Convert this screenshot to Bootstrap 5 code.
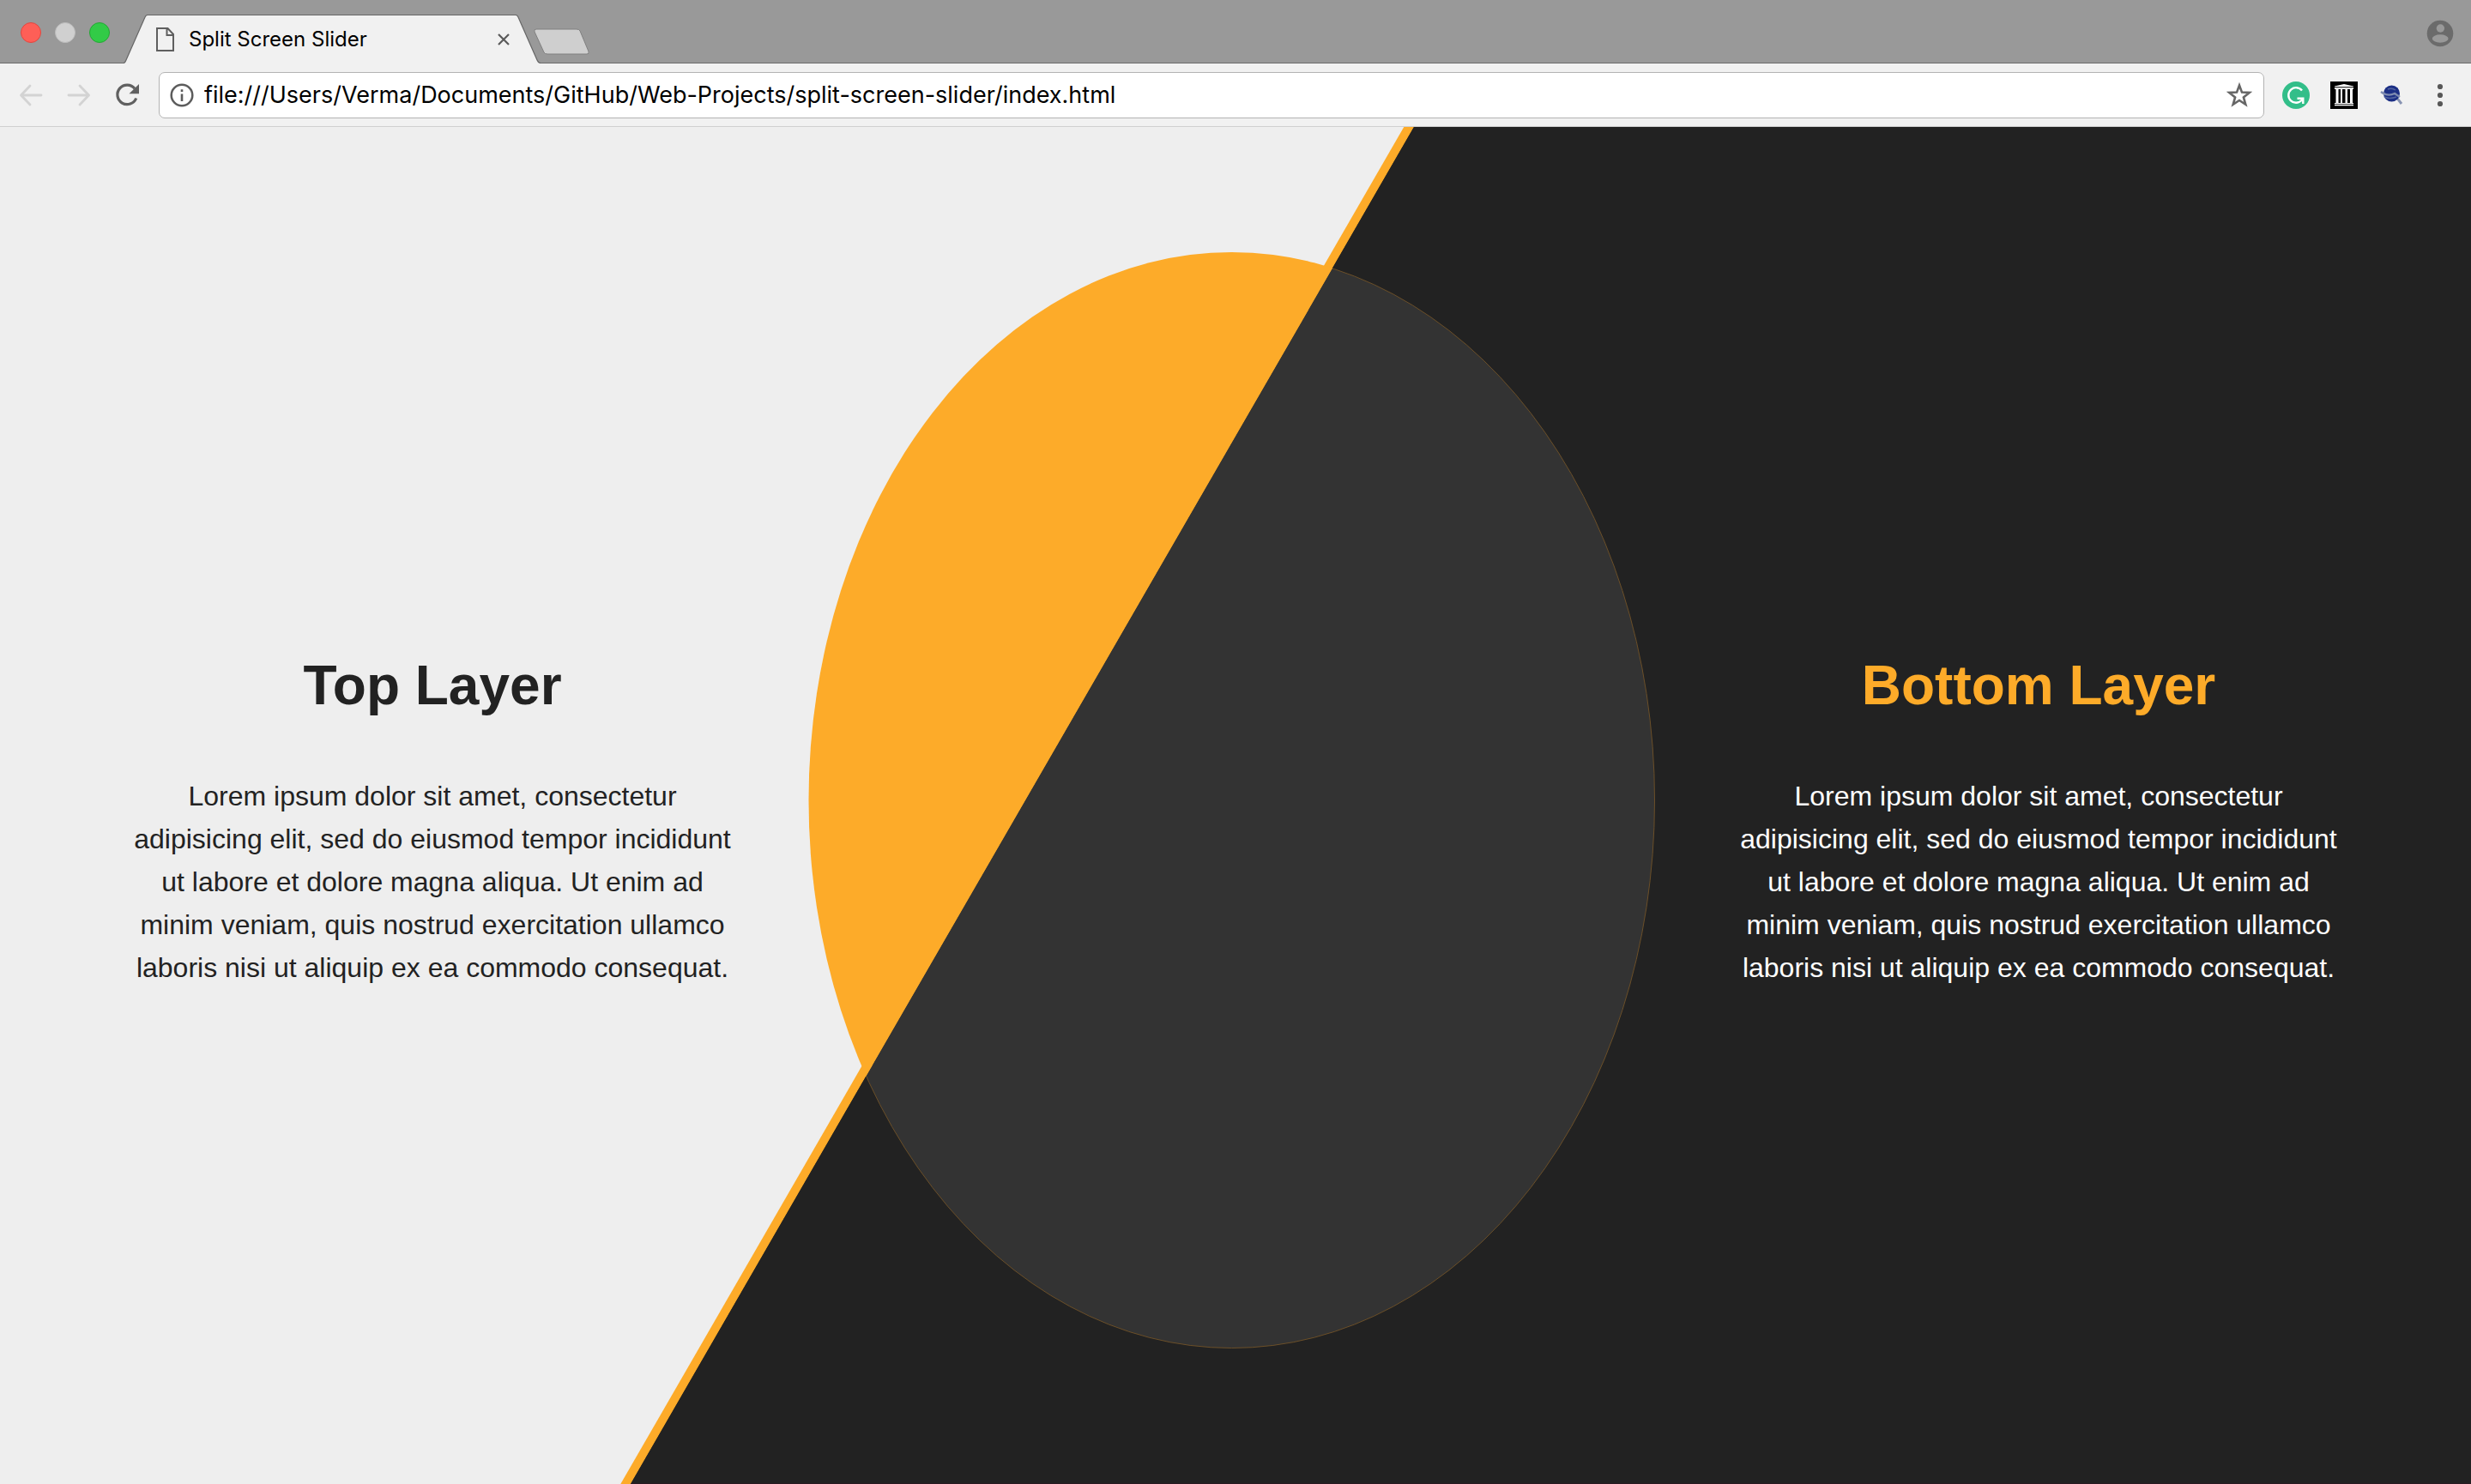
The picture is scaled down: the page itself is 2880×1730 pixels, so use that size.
<!DOCTYPE html>
<html lang="en">
<head>
<meta charset="utf-8">
<meta name="viewport" content="width=device-width, initial-scale=1">
<title>Split Screen Slider</title>
<link href="https://cdn.jsdelivr.net/npm/bootstrap@5.3.0/dist/css/bootstrap.min.css" rel="stylesheet">
<script src="https://cdn.jsdelivr.net/npm/bootstrap@5.3.0/dist/js/bootstrap.bundle.min.js" defer></script>
<style>
  body { font-family: "Liberation Sans", Arial, sans-serif; background: #222; }
  .chrome { font-family: Inter, Roboto, sans-serif; }
  .chrome svg { display: block; flex: none; }
  .chrome button { border: 0; padding: 0; background: none; flex: none; }
  .tab-strip { height: 74px; background: #999; border-bottom: 1px solid #6b6b6b; padding: 0 20px 0 24px; }
  .chrome .light { width: 24px; height: 24px; border-radius: 50%; border: 1px solid; }
  .chrome .light-close { background: #fe5f57; border-color: #e2463f; }
  .chrome .light-min { background: #d0d0d0; border-color: #bcbcbc; }
  .chrome .light-max { background: #32cb47; border-color: #23a833; }
  .window-lights { padding-top: 2px; }
  .page-tab { width: 486px; height: 57px; margin-left: 16px; padding: 0 36px 0 38px; margin-bottom: -1px; }
  .tab-shape { left: 0; top: 0; width: 100%; height: 100%; }
  .tab-title { font-size: 24px; line-height: 30px; color: #000; }
  .chrome .new-tab { margin: 0 0 8px -8px; }
  .tool-strip { height: 74px; background: #f1f1f1; border-bottom: 1px solid #cfcfcf; padding: 0 20px 0 22px; }
  .address { height: 54px; margin: 0 21px 0 23px; padding: 0 13px 0 12px; background: #fff; border: 1px solid #b3b3b3; border-radius: 7px; }
  .address input { border: 0; outline: 0; padding: 0; background: none; color: #000; font-size: 27px; line-height: 36px; }
  .extensions { gap: 24px; }
  .stage { background: #222; padding: 38px 5% 0; }
  .scene { inset: 0; width: 100%; height: 100%; }
  .layer-text { width: 720px; max-width: 40%; }
  .layer-text h1 { font-size: 64px; line-height: 72px; font-weight: 700; margin-bottom: 68px; }
  .layer-text p { font-size: 32px; line-height: 50px; margin: 0; }
  .layer-top { color: #222; }
  .layer-bottom { color: #fff; }
  .layer-bottom h1 { color: #fdab29; }
</style>
</head>
<body class="vh-100 d-flex flex-column overflow-hidden">
<header class="chrome">
  <div class="tab-strip d-flex align-items-end">
    <div class="window-lights d-flex align-self-center gap-3">
      <button class="light light-close" aria-label="Close window"></button>
      <button class="light light-min" aria-label="Minimise window"></button>
      <button class="light light-max" aria-label="Zoom window"></button>
    </div>
    <div class="page-tab position-relative d-flex align-items-center">
      <svg class="tab-shape position-absolute" viewBox="0 0 486 57" preserveAspectRatio="none" aria-hidden="true"><path d="M0 57 Q2 56 3 53 L25 3 Q26 .5 28 .5 H457 Q459 .5 460 3 L482 53 Q483 56 486 57Z" fill="#f1f1f1"/><path d="M0 56.5 Q2 56 3 53 L25 3 Q26 .5 28 .5 H457 Q459 .5 460 3 L482 53 Q483 56 486 56.5" fill="none" stroke="#666" stroke-width="1.2"/></svg>
      <svg class="position-relative" width="22" height="28" viewBox="0 0 22 28" aria-hidden="true"><path d="M1 1H13.500L20 8V27H1ZM12.500 1V9H20" fill="none" stroke="#5f5f5f" stroke-width="2"/></svg>
      <span class="tab-title position-relative ms-3 flex-grow-1">Split Screen Slider</span>
      <button class="position-relative" aria-label="Close tab"><svg width="14" height="14" viewBox="0 0 14 14"><path d="M1 1L13 13M13 1L1 13" stroke="#5a5a5a" stroke-width="2.200"/></svg></button>
    </div>
    <button class="new-tab" aria-label="New tab"><svg width="66" height="32" viewBox="0 0 66 32"><path d="M3 1H50Q53 1 54 3L64 27Q65 30 62 30H16Q13 30 12 28L1 4Q0 1 3 1Z" fill="#cfcfcf" stroke="#808080"/></svg></button>
    <button class="align-self-center ms-auto pt-1" aria-label="Profile"><svg width="32" height="32" viewBox="0 0 32 32"><circle cx="16" cy="16" r="15.300" fill="#6b6b6b"/><circle cx="16.400" cy="10" r="4.700" fill="#999"/><ellipse cx="16.200" cy="22" rx="9.400" ry="4.700" fill="#999"/></svg></button>
  </div>
  <div class="tool-strip d-flex align-items-center">
    <button aria-label="Back"><svg width="28" height="28" viewBox="0 0 28 28"><path d="M26 14H3M13 3L2.500 14L13 25" fill="none" stroke="#d3d3d3" stroke-width="2.800" stroke-linecap="round" stroke-linejoin="round"/></svg></button>
    <button class="ms-4 ps-1" aria-label="Forward"><svg width="28" height="28" viewBox="0 0 28 28"><path d="M2 14H25M15 3L25.500 14L15 25" fill="none" stroke="#d3d3d3" stroke-width="2.800" stroke-linecap="round" stroke-linejoin="round"/></svg></button>
    <button class="ms-4 ps-1" aria-label="Reload"><svg width="28" height="28" viewBox="0 0 28 28"><path d="M23 6.300A11.300 11.300 0 1 0 24.700 17.500" fill="none" stroke="#606060" stroke-width="3.200"/><path d="M28 1V12.200H16.500Z" fill="#606060"/></svg></button>
    <div class="address d-flex align-items-center flex-grow-1">
      <button aria-label="Site information"><svg width="28" height="28" viewBox="0 0 28 28"><circle cx="14" cy="14" r="12.300" fill="none" stroke="#5c5c5c" stroke-width="2.500"/><path d="M14 7.200V10M14 12.500V21" stroke="#5c5c5c" stroke-width="2.600"/></svg></button>
      <input class="flex-grow-1 ms-2 ps-1" type="text" aria-label="Address" value="file:///Users/Verma/Documents/GitHub/Web-Projects/split-screen-slider/index.html">
      <button aria-label="Bookmark this page"><svg width="30" height="30" viewBox="0 0 30 30"><path d="M15 3.500L18 11.600L26.700 12L19.900 17.400L22.300 25.800L15 21L7.700 25.800L10.100 17.400L3.300 12L12 11.600Z" fill="none" stroke="#666" stroke-width="2.600"/></svg></button>
    </div>
    <div class="extensions d-flex align-items-center">
      <button aria-label="Grammar checker"><svg width="32" height="32" viewBox="0 0 32 32"><circle cx="16" cy="16" r="16" fill="#32be89"/><path d="M23 10.500A8.800 8.800 0 1 0 22.500 22L24 20.500M17.500 19.800H24.300V26" fill="none" stroke="#fff" stroke-width="2.400"/></svg></button>
      <button aria-label="Web archive"><svg width="32" height="32" viewBox="0 0 32 32"><rect width="32" height="32"/><path d="M5 5.500L16 3L27 5.500V6.200H5ZM5 7.200H27V9H5ZM5 25H27V26.200H5ZM5 27H27V28.200H5ZM6.500 9H9.500V25H6.500ZM12 9H14V25H12ZM17.500 9H20V25H17.500ZM23 9H26V25H23Z" fill="#fff"/></svg></button>
      <button aria-label="Search extension"><svg width="32" height="32" viewBox="0 0 32 32"><path d="M20 17L27 26" stroke="#8793b2" stroke-width="3"/><circle cx="15.500" cy="14" r="9.500" fill="#1c2f85"/><path d="M3 12Q11 18 19 14L25 18" fill="none" stroke="#7e8bb0" stroke-width="2.400"/><path d="M7 18Q13 21 21 18M11 9Q16 7 20 10" fill="none" stroke="#5465a0" stroke-width="1.500"/></svg></button>
      <button aria-label="Menu"><svg width="32" height="32" viewBox="0 0 32 32" fill="#585858"><circle cx="16" cy="6" r="3.100"/><circle cx="16" cy="16" r="3.100"/><circle cx="16" cy="26" r="3.100"/></svg></button>
    </div>
  </div>
</header>
<main class="stage position-relative flex-grow-1 d-flex align-items-center justify-content-between">
  <svg class="scene position-absolute" viewBox="0 0 2880 1582" preserveAspectRatio="none" aria-hidden="true">
    <defs>
      <clipPath id="topSide"><path d="M0 0H1648L735 1582H0Z"/></clipPath>
    </defs>
    <path d="M735 1581H2880V1582H735Z" fill="#2a1a22"/>
    <ellipse cx="1435.500" cy="785" rx="493" ry="638.500" fill="#333" stroke="#6b4f28" stroke-width="1"/>
    <g clip-path="url(#topSide)">
      <path d="M0 0H1648L735 1582H0Z" fill="#fdab29"/>
      <path d="M0 0H1636.300L723.300 1582H0Z" fill="#eee"/>
      <ellipse cx="1435.500" cy="785" rx="493" ry="639" fill="#fdab29"/>
    </g>
  </svg>
  <section class="layer-text layer-top position-relative text-center">
    <h1>Top Layer</h1>
    <p>Lorem ipsum dolor sit amet, consectetur adipisicing elit, sed do eiusmod tempor incididunt ut labore et dolore magna aliqua. Ut enim ad minim veniam, quis nostrud exercitation ullamco laboris nisi ut aliquip ex ea commodo consequat.</p>
  </section>
  <section class="layer-text layer-bottom position-relative text-center">
    <h1>Bottom Layer</h1>
    <p>Lorem ipsum dolor sit amet, consectetur adipisicing elit, sed do eiusmod tempor incididunt ut labore et dolore magna aliqua. Ut enim ad minim veniam, quis nostrud exercitation ullamco laboris nisi ut aliquip ex ea commodo consequat.</p>
  </section>
</main>
</body>
</html>
